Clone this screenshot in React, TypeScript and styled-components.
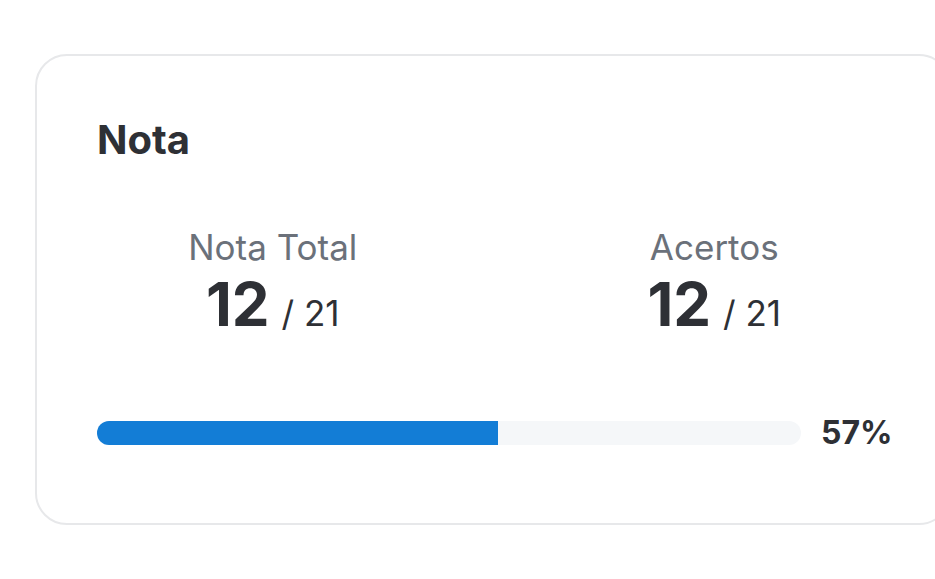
import styled, { createGlobalStyle } from "styled-components";

const GlobalStyle = createGlobalStyle`
  html, body {
    margin: 0;
    padding: 0;
    background: #ffffff;
    overflow: hidden;
  }
  body {
    font-family: Inter, "Noto Sans", "Liberation Sans", sans-serif;
    color: #2e3035;
  }
`;

const Page = styled.div`
  padding: 54px 0 0 35px;
  width: 935px;
  height: 579px;
  box-sizing: border-box;
`;

const Card = styled.section`
  box-sizing: border-box;
  width: 916px;
  height: 471px;
  border: 2px solid #e7e8ea;
  border-radius: 32px;
  padding: 60px 60px 0 60px;
  background: #fff;
`;

const Title = styled.h2`
  margin: 0;
  font-size: 40px;
  line-height: 48px;
  font-weight: 700;
  color: #2e3035;
`;

const Stats = styled.div`
  display: grid;
  grid-template-columns: repeat(2, 1fr);
  column-gap: 90px;
  width: 793px;
  margin-top: 62px;
`;

const Stat = styled.div`
  display: flex;
  flex-direction: column;
  align-items: center;
`;

const Label = styled.span`
  font-size: 35px;
  line-height: 42px;
  color: #6b717a;
`;

const Value = styled.div`
  display: flex;
  align-items: baseline;
  gap: 12px;
  margin-top: 3px;
  line-height: 66px;
`;

const Big = styled.span`
  font-size: 60px;
  font-weight: 700;
  color: #2e3035;
`;

const Small = styled.span`
  font-size: 35px;
  color: #2e3035;
`;

const ProgressRow = styled.div`
  display: flex;
  align-items: center;
  gap: 20px;
  width: 793px;
  margin-top: 67px;
`;

const Track = styled.div`
  flex: 0 0 704px;
  height: 24px;
  border-radius: 12px;
  background: #f5f7f9;
  overflow: hidden;
`;

const Fill = styled.div`
  height: 100%;
  background: #137dd6;
`;

const Percent = styled.span`
  font-size: 32px;
  font-weight: 700;
  color: #2e3035;
`;

const stats = [
  { label: "Nota Total", value: 12, total: 21 },
  { label: "Acertos", value: 12, total: 21 },
];

export default function App() {
  const pct = 57;
  return (
    <>
      <GlobalStyle />
      <Page>
        <Card>
          <Title>Nota</Title>
          <Stats>
            {stats.map((s) => (
              <Stat key={s.label}>
                <Label>{s.label}</Label>
                <Value>
                  <Big>{s.value}</Big>
                  <Small>/ {s.total}</Small>
                </Value>
              </Stat>
            ))}
          </Stats>
          <ProgressRow>
            <Track>
              <Fill style={{ width: `${pct}%` }} />
            </Track>
            <Percent>{pct}%</Percent>
          </ProgressRow>
        </Card>
      </Page>
    </>
  );
}
